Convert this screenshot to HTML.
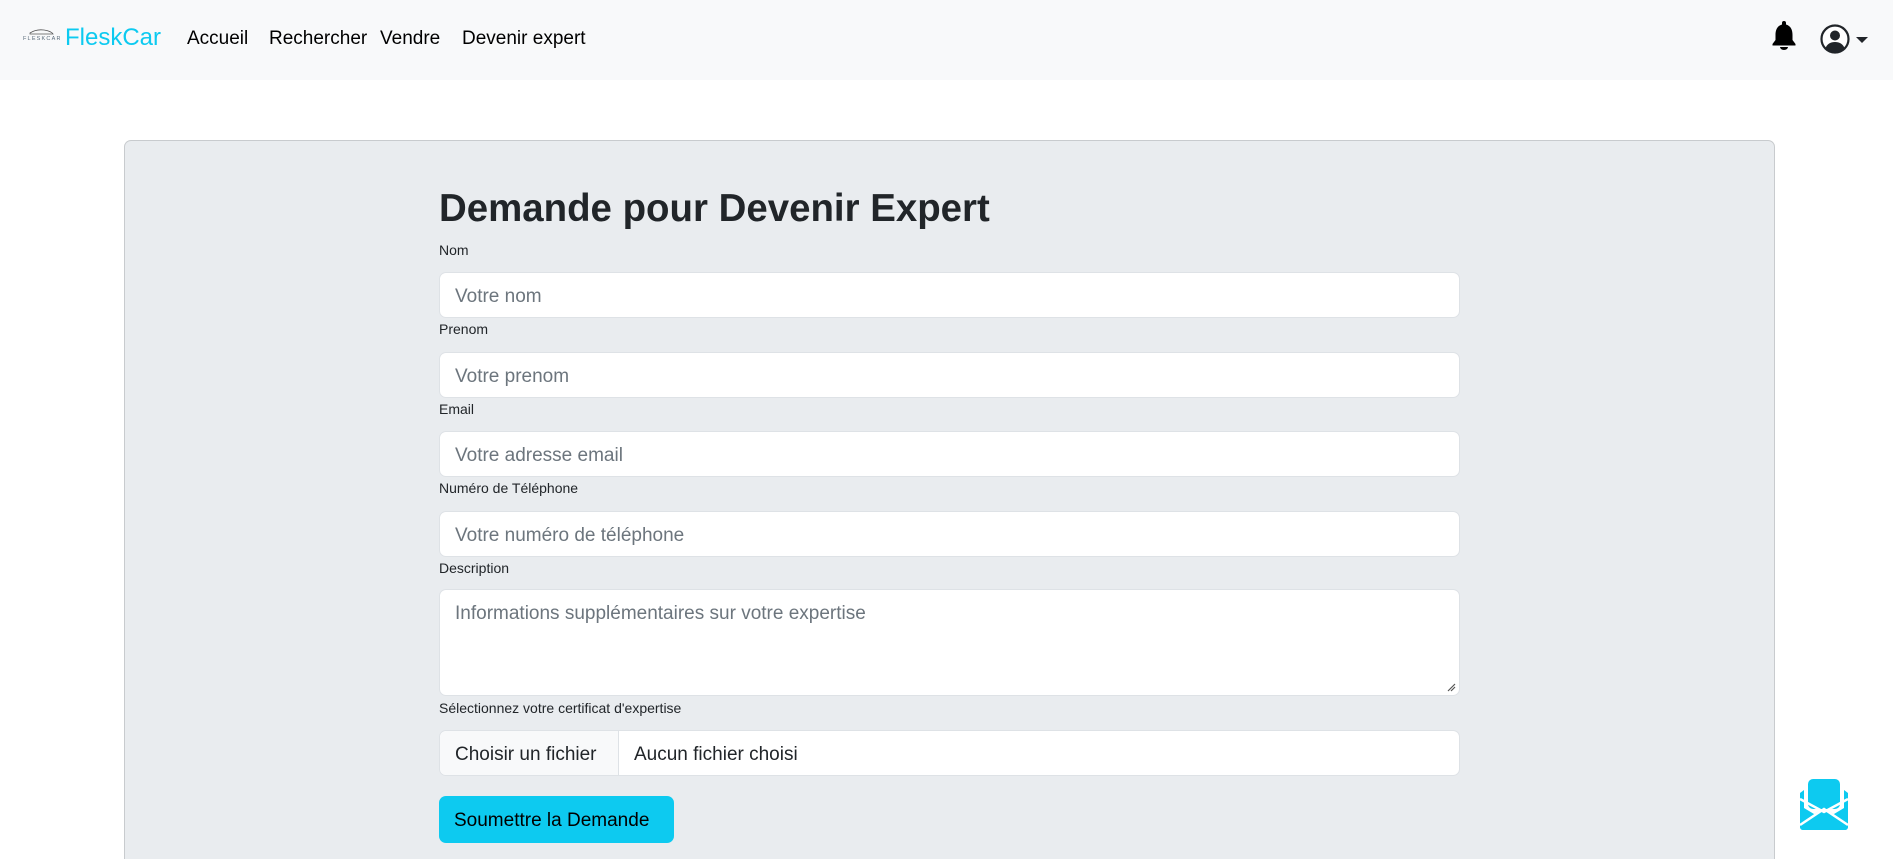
<!DOCTYPE html>
<html><head><meta charset="utf-8">
<style>
*{box-sizing:border-box;margin:0;padding:0}
html,body{width:1893px;height:859px;overflow:hidden;background:#fff;font-family:"Liberation Sans",sans-serif;color:#212529;position:relative}
.nav{position:absolute;left:0;top:0;width:1893px;height:80px;background:#f8f9fa}
.brand{position:absolute;left:65px;top:24px;font-size:24px;color:#0dcaf0}
.link{position:absolute;top:28px;font-size:19px;color:#000}
.panel{position:absolute;left:124px;top:140px;width:1651px;height:719px;background:#e9ecef;border:1px solid #c8cbce;border-bottom:none;border-radius:7px 7px 0 0}
h1{position:absolute;left:439px;top:187px;font-size:39px;font-weight:bold;transform-origin:left center;transform:scaleX(0.985);white-space:nowrap;color:#212529}
.lbl{position:absolute;left:439px;font-size:14px;color:#212529}
.inp{position:absolute;left:439px;width:1021px;height:46px;background:#fff;border:1px solid #dee2e6;border-radius:7px;font-size:19px;color:#6c757d;padding:13px 15px 0}
.btn{position:absolute;left:439px;top:796px;width:235px;height:47px;background:#0dcaf0;border-radius:7px;font-size:19px;color:#000;padding:14px 15px 0;white-space:nowrap}
</style></head><body>
<div class="nav">
  <svg style="position:absolute;left:22px;top:27px" width="38" height="18" viewBox="0 0 38 18">
    <path d="M8 6 Q14 2 22 3 Q29 4 31 7 L8 7Z" fill="none" stroke="#555" stroke-width="0.8"/>
    <text x="1" y="13" font-size="5.5" font-family="Liberation Sans" fill="#5a6b7a" letter-spacing="1.2">FLESKCAR</text>
  </svg>
  <div class="brand">FleskCar</div>
  <div class="link" style="left:187px">Accueil</div>
  <div class="link" style="left:269px">Rechercher</div>
  <div class="link" style="left:380px">Vendre</div>
  <div class="link" style="left:462px">Devenir expert</div>
  <svg style="position:absolute;left:1771px;top:20px" width="26" height="32" viewBox="0 0 26 32">
    <path d="M13 1 a2 2 0 0 1 2 2 v1.5 C20 6 21.5 10 21.5 15 v5 l3 4 v1.5 H1.5 V24 l3-4 v-5 C4.5 10 6 6 11 4.5 V3 a2 2 0 0 1 2-2z" fill="#000"/>
    <path d="M9 27 h8 a4 3 0 0 1 -8 0z" fill="#000"/>
  </svg>
  <svg style="position:absolute;left:1820px;top:24px" width="30" height="30" viewBox="0 0 30 30">
    <circle cx="15" cy="15" r="13.5" fill="#fff" stroke="#212529" stroke-width="2.2"/>
    <circle cx="15" cy="11.5" r="5" fill="#212529"/>
    <path d="M5.5 24 Q8 18 15 18 Q22 18 24.5 24 Q20 28.5 15 28.5 Q10 28.5 5.5 24z" fill="#212529"/>
  </svg>
  <svg style="position:absolute;left:1856px;top:37px" width="12" height="7" viewBox="0 0 12 7"><path d="M0 0 H12 L6 6z" fill="#212529"/></svg>
</div>

<div class="panel"></div>
<h1>Demande pour Devenir Expert</h1>

<div class="lbl" style="top:242px">Nom</div>
<div class="inp" style="top:272px">Votre nom</div>
<div class="lbl" style="top:321px">Prenom</div>
<div class="inp" style="top:352px">Votre prenom</div>
<div class="lbl" style="top:401px">Email</div>
<div class="inp" style="top:431px">Votre adresse email</div>
<div class="lbl" style="top:480px">Numéro de Téléphone</div>
<div class="inp" style="top:511px">Votre numéro de téléphone</div>
<div class="lbl" style="top:560px">Description</div>
<div class="inp" style="top:589px;height:107px">Informations supplémentaires sur votre expertise
  <svg style="position:absolute;right:3px;bottom:3px" width="9" height="9" viewBox="0 0 9 9"><path d="M1 8 L8 1 M4 8 L8 4" stroke="#555" stroke-width="1.2"/></svg>
</div>
<div class="lbl" style="top:700px">Sélectionnez votre certificat d'expertise</div>
<div class="inp" style="top:730px;padding:0;color:#212529">
  <div style="position:absolute;left:0;top:0;width:179px;height:44px;background:#f8f9fa;border-right:1px solid #dee2e6;border-radius:7px 0 0 7px;padding:13px 15px 0">Choisir un fichier</div>
  <div style="position:absolute;left:194px;top:13px">Aucun fichier choisi</div>
</div>
<div class="btn">Soumettre la Demande</div>

<svg style="position:absolute;left:1798px;top:779px" width="52" height="52" viewBox="0 0 52 52">
  <rect x="10" y="0" width="32" height="30" rx="5" fill="#0dcaf0"/>
  <path d="M6 11 L6 29 L26 41 L46 29 L46 11 L50 14 L50 48 a3 3 0 0 1 -3 3 H5 a3 3 0 0 1 -3 -3 V14z" fill="#0dcaf0"/>
  <path d="M2 48 L2 44 L26 29 L50 44 L50 48 a3 3 0 0 1 -3 3 H5 a3 3 0 0 1 -3 -3z" fill="#0dcaf0"/>
  <path d="M2 20 L26 33 L50 20" fill="none" stroke="#fff" stroke-width="2.5"/>
  <path d="M2 46 L26 30 L50 46" fill="none" stroke="#fff" stroke-width="2.5"/>
</svg>
</body></html>
